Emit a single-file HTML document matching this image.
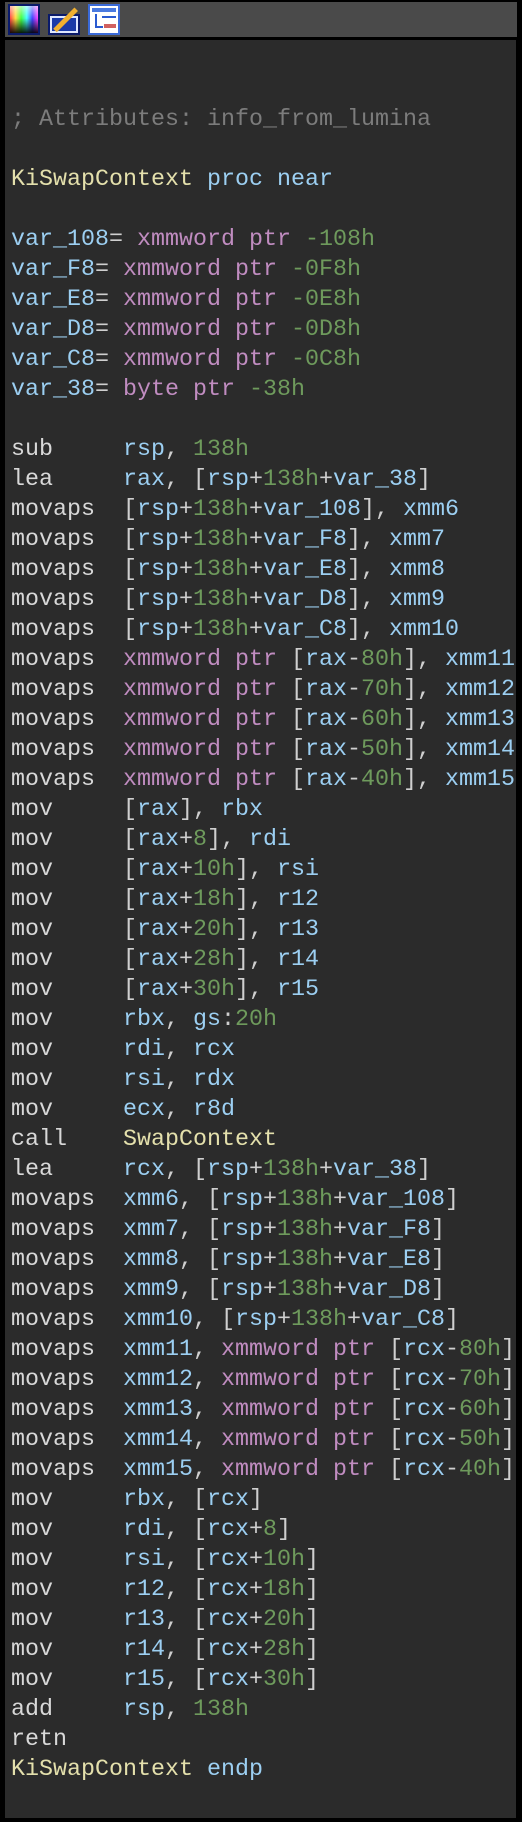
<!DOCTYPE html>
<html><head><meta charset="utf-8"><style>
html,body{margin:0;padding:0;background:#000;}
body{width:522px;height:1822px;position:relative;overflow:hidden;}
#tb{position:absolute;left:5px;top:2px;width:512px;height:35px;background:#4a4a4a;}
#ct{position:absolute;left:5px;top:40px;width:511px;height:1778px;background:#2b2b2b;}
pre{position:absolute;left:11px;top:105px;margin:0;font-family:"Liberation Mono",monospace;font-size:23.33px;line-height:30px;color:#d8d8d8;white-space:pre;}
.r{color:#9ccff2}.n{color:#6e9a5c}.p{color:#cfcfcf}.x{color:#c08cc0}.c{color:#7c7c7c}.f{color:#e4e0ac}.k{color:#9ccff2}
.ic{position:absolute;top:4px;width:32px;height:31px;box-sizing:border-box;}
</style></head><body>
<div id="tb"></div>
<div class="ic" style="left:8px;border:2px solid #0a1a6a;background:linear-gradient(to bottom,rgba(255,255,255,0.6),rgba(0,0,0,0) 45%,rgba(0,0,0,0.9)),linear-gradient(to right,#f44,#fd4,#4f4,#4ff,#44f,#f4f);"></div>
<div class="ic" style="left:48px;top:14px;height:21px;border:2px solid #0a1a6a;background:#1a3aa8;box-shadow:inset 0 0 0 2px #dfe8ff;"></div>
<div style="position:absolute;left:55px;top:11px;width:30px;height:5px;background:#f0b030;transform:rotate(-45deg);transform-origin:left center;top:28px;"></div>
<div class="ic" style="left:88px;border:2px solid #3a6ad8;background:#fff;">
<div style="position:absolute;left:2px;top:2px;width:24px;height:4px;background:#4a7ae0"></div>
<div style="position:absolute;left:14px;top:18px;width:12px;height:4px;background:#d06060"></div>
<div style="position:absolute;left:5px;top:8px;width:2px;height:14px;background:#2a5ad0"></div>
<div style="position:absolute;left:5px;top:20px;width:8px;height:2px;background:#2a5ad0"></div>
<div style="position:absolute;left:12px;top:10px;width:14px;height:2px;background:#2a5ad0"></div>
</div>
<div id="ct"></div>
<pre><span class="c">; Attributes: info_from_lumina</span>

<span class="f">KiSwapContext</span> <span class="k">proc near</span>

<span class="r">var_108</span><span class="p">=</span> <span class="x">xmmword ptr</span> <span class="n">-108h</span>
<span class="r">var_F8</span><span class="p">=</span> <span class="x">xmmword ptr</span> <span class="n">-0F8h</span>
<span class="r">var_E8</span><span class="p">=</span> <span class="x">xmmword ptr</span> <span class="n">-0E8h</span>
<span class="r">var_D8</span><span class="p">=</span> <span class="x">xmmword ptr</span> <span class="n">-0D8h</span>
<span class="r">var_C8</span><span class="p">=</span> <span class="x">xmmword ptr</span> <span class="n">-0C8h</span>
<span class="r">var_38</span><span class="p">=</span> <span class="x">byte ptr</span> <span class="n">-38h</span>

sub     <span class="r">rsp</span><span class="p">,</span> <span class="n">138h</span>
lea     <span class="r">rax</span><span class="p">, [</span><span class="r">rsp</span><span class="p">+</span><span class="n">138h</span><span class="p">+</span><span class="r">var_38</span><span class="p">]</span>
movaps  <span class="p">[</span><span class="r">rsp</span><span class="p">+</span><span class="n">138h</span><span class="p">+</span><span class="r">var_108</span><span class="p">],</span> <span class="r">xmm6</span>
movaps  <span class="p">[</span><span class="r">rsp</span><span class="p">+</span><span class="n">138h</span><span class="p">+</span><span class="r">var_F8</span><span class="p">],</span> <span class="r">xmm7</span>
movaps  <span class="p">[</span><span class="r">rsp</span><span class="p">+</span><span class="n">138h</span><span class="p">+</span><span class="r">var_E8</span><span class="p">],</span> <span class="r">xmm8</span>
movaps  <span class="p">[</span><span class="r">rsp</span><span class="p">+</span><span class="n">138h</span><span class="p">+</span><span class="r">var_D8</span><span class="p">],</span> <span class="r">xmm9</span>
movaps  <span class="p">[</span><span class="r">rsp</span><span class="p">+</span><span class="n">138h</span><span class="p">+</span><span class="r">var_C8</span><span class="p">],</span> <span class="r">xmm10</span>
movaps  <span class="x">xmmword ptr</span> <span class="p">[</span><span class="r">rax</span><span class="p">-</span><span class="n">80h</span><span class="p">],</span> <span class="r">xmm11</span>
movaps  <span class="x">xmmword ptr</span> <span class="p">[</span><span class="r">rax</span><span class="p">-</span><span class="n">70h</span><span class="p">],</span> <span class="r">xmm12</span>
movaps  <span class="x">xmmword ptr</span> <span class="p">[</span><span class="r">rax</span><span class="p">-</span><span class="n">60h</span><span class="p">],</span> <span class="r">xmm13</span>
movaps  <span class="x">xmmword ptr</span> <span class="p">[</span><span class="r">rax</span><span class="p">-</span><span class="n">50h</span><span class="p">],</span> <span class="r">xmm14</span>
movaps  <span class="x">xmmword ptr</span> <span class="p">[</span><span class="r">rax</span><span class="p">-</span><span class="n">40h</span><span class="p">],</span> <span class="r">xmm15</span>
mov     <span class="p">[</span><span class="r">rax</span><span class="p">],</span> <span class="r">rbx</span>
mov     <span class="p">[</span><span class="r">rax</span><span class="p">+</span><span class="n">8</span><span class="p">],</span> <span class="r">rdi</span>
mov     <span class="p">[</span><span class="r">rax</span><span class="p">+</span><span class="n">10h</span><span class="p">],</span> <span class="r">rsi</span>
mov     <span class="p">[</span><span class="r">rax</span><span class="p">+</span><span class="n">18h</span><span class="p">],</span> <span class="r">r12</span>
mov     <span class="p">[</span><span class="r">rax</span><span class="p">+</span><span class="n">20h</span><span class="p">],</span> <span class="r">r13</span>
mov     <span class="p">[</span><span class="r">rax</span><span class="p">+</span><span class="n">28h</span><span class="p">],</span> <span class="r">r14</span>
mov     <span class="p">[</span><span class="r">rax</span><span class="p">+</span><span class="n">30h</span><span class="p">],</span> <span class="r">r15</span>
mov     <span class="r">rbx</span><span class="p">,</span> <span class="r">gs</span><span class="p">:</span><span class="n">20h</span>
mov     <span class="r">rdi</span><span class="p">,</span> <span class="r">rcx</span>
mov     <span class="r">rsi</span><span class="p">,</span> <span class="r">rdx</span>
mov     <span class="r">ecx</span><span class="p">,</span> <span class="r">r8d</span>
call    <span class="f">SwapContext</span>
lea     <span class="r">rcx</span><span class="p">, [</span><span class="r">rsp</span><span class="p">+</span><span class="n">138h</span><span class="p">+</span><span class="r">var_38</span><span class="p">]</span>
movaps  <span class="r">xmm6</span><span class="p">, [</span><span class="r">rsp</span><span class="p">+</span><span class="n">138h</span><span class="p">+</span><span class="r">var_108</span><span class="p">]</span>
movaps  <span class="r">xmm7</span><span class="p">, [</span><span class="r">rsp</span><span class="p">+</span><span class="n">138h</span><span class="p">+</span><span class="r">var_F8</span><span class="p">]</span>
movaps  <span class="r">xmm8</span><span class="p">, [</span><span class="r">rsp</span><span class="p">+</span><span class="n">138h</span><span class="p">+</span><span class="r">var_E8</span><span class="p">]</span>
movaps  <span class="r">xmm9</span><span class="p">, [</span><span class="r">rsp</span><span class="p">+</span><span class="n">138h</span><span class="p">+</span><span class="r">var_D8</span><span class="p">]</span>
movaps  <span class="r">xmm10</span><span class="p">, [</span><span class="r">rsp</span><span class="p">+</span><span class="n">138h</span><span class="p">+</span><span class="r">var_C8</span><span class="p">]</span>
movaps  <span class="r">xmm11</span><span class="p">,</span> <span class="x">xmmword ptr</span> <span class="p">[</span><span class="r">rcx</span><span class="p">-</span><span class="n">80h</span><span class="p">]</span>
movaps  <span class="r">xmm12</span><span class="p">,</span> <span class="x">xmmword ptr</span> <span class="p">[</span><span class="r">rcx</span><span class="p">-</span><span class="n">70h</span><span class="p">]</span>
movaps  <span class="r">xmm13</span><span class="p">,</span> <span class="x">xmmword ptr</span> <span class="p">[</span><span class="r">rcx</span><span class="p">-</span><span class="n">60h</span><span class="p">]</span>
movaps  <span class="r">xmm14</span><span class="p">,</span> <span class="x">xmmword ptr</span> <span class="p">[</span><span class="r">rcx</span><span class="p">-</span><span class="n">50h</span><span class="p">]</span>
movaps  <span class="r">xmm15</span><span class="p">,</span> <span class="x">xmmword ptr</span> <span class="p">[</span><span class="r">rcx</span><span class="p">-</span><span class="n">40h</span><span class="p">]</span>
mov     <span class="r">rbx</span><span class="p">, [</span><span class="r">rcx</span><span class="p">]</span>
mov     <span class="r">rdi</span><span class="p">, [</span><span class="r">rcx</span><span class="p">+</span><span class="n">8</span><span class="p">]</span>
mov     <span class="r">rsi</span><span class="p">, [</span><span class="r">rcx</span><span class="p">+</span><span class="n">10h</span><span class="p">]</span>
mov     <span class="r">r12</span><span class="p">, [</span><span class="r">rcx</span><span class="p">+</span><span class="n">18h</span><span class="p">]</span>
mov     <span class="r">r13</span><span class="p">, [</span><span class="r">rcx</span><span class="p">+</span><span class="n">20h</span><span class="p">]</span>
mov     <span class="r">r14</span><span class="p">, [</span><span class="r">rcx</span><span class="p">+</span><span class="n">28h</span><span class="p">]</span>
mov     <span class="r">r15</span><span class="p">, [</span><span class="r">rcx</span><span class="p">+</span><span class="n">30h</span><span class="p">]</span>
add     <span class="r">rsp</span><span class="p">,</span> <span class="n">138h</span>
retn
<span class="f">KiSwapContext</span> <span class="k">endp</span></pre>
</body></html>
